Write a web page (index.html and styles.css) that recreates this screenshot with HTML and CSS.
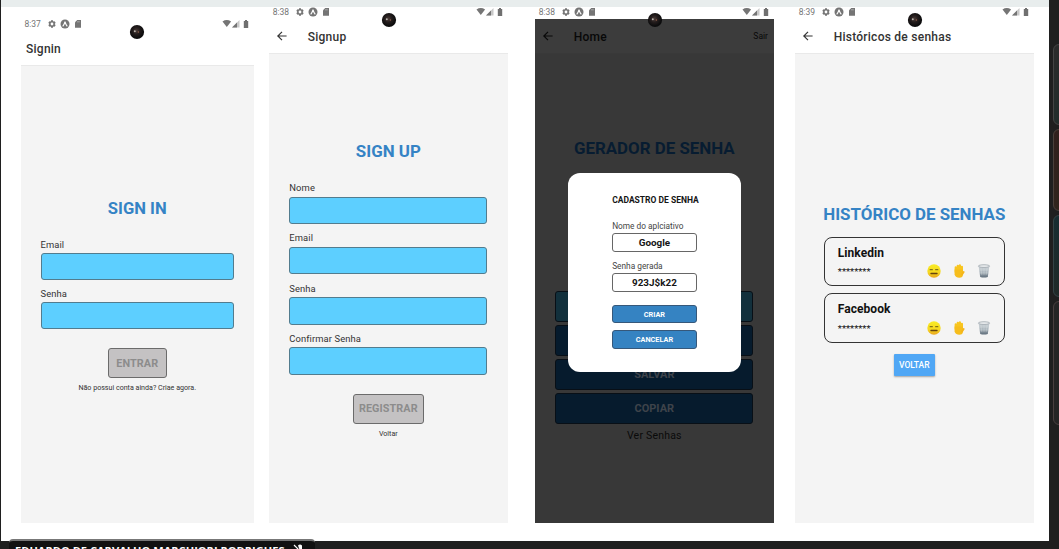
FILE: index.html
```
<!DOCTYPE html>
<html lang="pt-BR">
<head>
<meta charset="utf-8">
<title>Gerador de senha</title>
<link rel="stylesheet" href="styles.css">
</head>
<body>
<svg class="defs" width="0" height="0">
  <defs>
    <radialGradient id="lens" cx=".45" cy=".42" r=".5"><stop offset="0" stop-color="#4a3c38"/><stop offset=".5" stop-color="#231c1c"/><stop offset="1" stop-color="#0c0c0d"/></radialGradient>
    <linearGradient id="face" x1="0" y1="0" x2="0" y2="1"><stop offset="0" stop-color="#f8ec25"/><stop offset=".6" stop-color="#f6d820"/><stop offset="1" stop-color="#e9a51d"/></linearGradient>
    <linearGradient id="bin" x1="0" y1="0" x2="0" y2="1"><stop offset="0" stop-color="#d4dade"/><stop offset=".55" stop-color="#a9b3bb"/><stop offset="1" stop-color="#5c6b78"/></linearGradient>
  </defs>
  <symbol id="left-icons" viewBox="0 0 36 12">
    <path d="M6 2.300v7.400M2.800 4.150l6.400 3.700M2.800 7.850l6.400-3.700" stroke="#757575" stroke-width="2"/>
    <circle cx="6" cy="6" r="2.900" fill="#757575"/><circle cx="6" cy="6" r="1.400" fill="#fff"/>
    <circle cx="19" cy="6" r="4.500" fill="#757575"/>
    <path d="M16.700 8.300Q18.200 6.700 19 3.600Q19.800 6.700 21.300 8.300" fill="none" stroke="#fff" stroke-width="1.1"/>
    <path d="M31.200 2H35v7.800h-6V4.200z" fill="#757575"/><path d="M31 3.800h2.800" stroke="#ccc" stroke-width=".6"/>
  </symbol>
  <symbol id="right-icons" viewBox="0 0 28 12">
    <path d="M.5 3.500Q4.800 .700 9.100 3.500L4.800 9z" fill="#757575"/>
    <path d="M17.500 2v7.500H10z" fill="#c8c8c8"/><path d="M15 4.500v5h-5z" fill="#757575"/>
    <path d="M21.800 3h1.200V2h2v1h1.200v7h-4.400z" fill="#707070"/>
  </symbol>
  <symbol id="back" viewBox="0 0 12 12">
    <path d="M10.600 6H2M6 1.800L1.800 6L6 10.200" fill="none" stroke="currentColor" stroke-width="1.15"/>
  </symbol>
  <symbol id="camera" viewBox="0 0 16 16">
    <circle cx="8" cy="8" r="7.100" fill="url(#lens)"/><circle cx="5.800" cy="7.200" r="1" fill="#b8b3ad"/><circle cx="9.400" cy="8" r=".7" fill="#936049"/>
  </symbol>
  <symbol id="emoji-face" viewBox="0 0 14 14">
    <circle cx="7" cy="7" r="6.700" fill="url(#face)"/>
    <path d="M2.700 5.700h3.100M8.200 5.700h3.100" stroke="#594c14" stroke-width=".9"/><path d="M4 9.500h6" stroke="#66440d" stroke-width="1.4" stroke-linecap="round"/>
  </symbol>
  <symbol id="emoji-hand" viewBox="0 0 12 14">
    <path d="M2.700 8V3.400M4.800 7V1.800M6.900 7V1.400M8.900 7V2.800" stroke="#f8c51f" stroke-width="2.200" stroke-linecap="round"/>
    <path d="M1.600 5.500h8.400v4.700q0 3.500-3.800 3.500q-3.400 0-4.600-3z" fill="#f6bd1c"/><path d="M9 10.500l1.700-2.600" stroke="#f4b41a" stroke-width="1.800" stroke-linecap="round"/>
  </symbol>
  <symbol id="emoji-bin" viewBox="0 0 14 14">
    <path d="M1.600 2h10.800l-1.600 11q-3.800 1.200-7.600 0z" fill="url(#bin)"/>
    <path d="M4 4l.8 7M7 4v7M10 4l-.8 7M2.300 6h9.400M2.700 9h8.600" stroke="#e2e6e8" stroke-width=".3"/>
    <ellipse cx="7" cy="2.100" rx="5.700" ry="1.400" fill="#e5e8ea" stroke="#9ba4aa" stroke-width=".7"/>
  </symbol>
</svg>
<div class="call">
  <main class="stage">
    <section class="phone phone-signin">
      <svg class="camera"><use href="#camera"/></svg>
      <div class="status"><span>8:37</span><svg class="status-left"><use href="#left-icons"/></svg><svg class="status-right"><use href="#right-icons"/></svg></div>
      <header class="appbar"><h2>Signin</h2></header>
      <div class="screen">
        <h1 class="title t-signin">SIGN IN</h1>
        <form class="form">
          <label>Email</label><div class="field"></div>
          <label>Senha</label><div class="field"></div>
        </form>
        <div class="submit submit-signin">ENTRAR</div>
        <p class="link link-signin">Não possui conta ainda? Criae agora.</p>
      </div>
    </section>
    <section class="phone phone-signup">
      <svg class="camera"><use href="#camera"/></svg>
      <div class="status"><span>8:38</span><svg class="status-left"><use href="#left-icons"/></svg><svg class="status-right"><use href="#right-icons"/></svg></div>
      <header class="appbar"><svg class="back"><use href="#back"/></svg><h2>Signup</h2></header>
      <div class="screen">
        <h1 class="title">SIGN UP</h1>
        <form class="form">
          <label>Nome</label><div class="field"></div>
          <label>Email</label><div class="field"></div>
          <label>Senha</label><div class="field"></div>
          <label>Confirmar Senha</label><div class="field"></div>
        </form>
        <div class="submit submit-signup">REGISTRAR</div>
        <p class="link">Voltar</p>
      </div>
    </section>
    <section class="phone phone-home">
      <svg class="camera"><use href="#camera"/></svg>
      <div class="status"><span>8:38</span><svg class="status-left"><use href="#left-icons"/></svg><svg class="status-right"><use href="#right-icons"/></svg></div>
      <header class="appbar"><svg class="back"><use href="#back"/></svg><h2>Home</h2><span class="exit">Sair</span></header>
      <div class="screen">
        <h1 class="title t-home">GERADOR DE SENHA</h1>
        <div class="actions">
          <div class="action output"></div>
          <div class="action"></div>
          <div class="action">SALVAR</div>
          <div class="action">COPIAR</div>
        </div>
        <p class="see">Ver Senhas</p>
      </div>
      <div class="modal">
        <h3>CADASTRO DE SENHA</h3>
        <label>Nome do aplciativo</label><div class="input">Google</div>
        <label>Senha gerada</label><div class="input">923J$k22</div>
        <div class="modal-btn">CRIAR</div>
        <div class="modal-btn">CANCELAR</div>
      </div>
    </section>
    <section class="phone phone-history">
      <svg class="camera"><use href="#camera"/></svg>
      <div class="status"><span>8:39</span><svg class="status-left"><use href="#left-icons"/></svg><svg class="status-right"><use href="#right-icons"/></svg></div>
      <header class="appbar"><svg class="back"><use href="#back"/></svg><h2>Históricos de senhas</h2></header>
      <div class="screen">
        <h1 class="title t-history">HISTÓRICO DE SENHAS</h1>
        <div class="cards">
          <article class="card"><h4>Linkedin</h4><div class="row"><span>********</span><svg class="e-face"><use href="#emoji-face"/></svg><svg class="e-hand"><use href="#emoji-hand"/></svg><svg class="e-bin"><use href="#emoji-bin"/></svg></div></article>
          <article class="card"><h4>Facebook</h4><div class="row"><span>********</span><svg class="e-face"><use href="#emoji-face"/></svg><svg class="e-hand"><use href="#emoji-hand"/></svg><svg class="e-bin"><use href="#emoji-bin"/></svg></div></article>
        </div>
        <div class="return">VOLTAR</div>
      </div>
    </section>
  </main>
  <aside class="tiles">
    <div class="tile t1"></div><div class="tile t2"></div><div class="tile t3"></div><div class="tile t4"></div>
  </aside>
  <div class="nametag"><span>EDUARDO DE CARVALHO MARCHIORI RODRIGUES</span>
    <svg class="mic" viewBox="0 0 12 12"><path d="M5 1.500q2-2 4 0v4q-1.500 1-2.500 0z" fill="#fff"/><path d="M1 1l9 9" stroke="#fff" stroke-width="1.2"/></svg>
  </div>
</div>
</body>
</html>
```
FILE: styles.css
```
* { box-sizing: border-box; }
body { margin: 0; background: #1f1f1f; font-family: Roboto, "Liberation Sans", sans-serif; overflow: hidden; }
h1, h2, h3, h4, p { margin: 0; }
svg { display: block; flex: none; }
.defs { position: absolute; }
.call { position: relative; display: flex; width: 1059px; height: 549px; overflow: hidden; padding-left: 1px; }
.stage { width: 1048px; height: 541px; flex: none; display: flex; align-items: flex-start; background: #fff; border-top: 7px solid #e8eded; padding-left: 19.500px; }

.phone { position: relative; width: 239.300px; flex: none; height: 516px; display: flex; flex-direction: column; color: #333; }
.phone-signin { width: 233.500px; margin-top: 12px; height: 504px; }
.phone-signup { margin-left: 14.700px; }
.phone-home { margin-left: 26.700px; }
.phone-history { margin-left: 20.700px; }
.camera { position: absolute; width: 16px; height: 16px; left: 112.300px; top: 4.500px; z-index: 2; }
.phone-signin .camera { left: 108.700px; top: 4.500px; }
.status { height: 11.500px; flex: none; display: flex; align-items: center; padding: 0 4px; font-size: 8.500px; line-height: 11px; color: #757575; }
.status span { width: 17px; white-space: nowrap; }
.status-left { width: 36px; height: 12px; margin: -1px 0 0 4px; }
.status-right { width: 28px; height: 12px; margin: -1px 0 0 auto; }
.appbar { height: 34.500px; flex: none; display: flex; align-items: center; padding: 1px 6px 0 7px; }
.appbar h2 { font-size: 12px; font-weight: 500; line-height: 14px; letter-spacing: .25px; padding-top: 1px; white-space: nowrap; }
.back { width: 12px; height: 12px; margin-right: 20px; }
.phone-signin .appbar { padding-left: 5.500px; }
.screen { flex: 1; background: #f4f4f4; border-top: 1px solid #e9e9e9; display: flex; flex-direction: column; align-items: center; }

.title { margin-top: 86.500px; height: 20px; line-height: 20px; font-size: 16.900px; font-weight: 700; color: #3583c5; white-space: nowrap; }
.t-signin { margin-top: 132.500px; font-size: 16.600px; }
.form { width: 198px; margin-top: 20.500px; display: flex; flex-direction: column; }
.form label { height: 15.500px; line-height: 14px; font-size: 9.400px; letter-spacing: .1px; }
.field { height: 27.500px; margin-bottom: 7.300px; background: #5dcfff; border: 1px solid #527c8e; border-radius: 3px; }
.phone-signin .form { width: 193.500px; margin-top: 19px; }
.phone-signin .field { height: 27px; margin-bottom: 6.500px; }
.submit { display: flex; align-items: center; justify-content: center; height: 30px; border: 1px solid #6b6b6b; border-radius: 3px; background: #c4c2c3; color: #8c8c8c; font-size: 10.800px; font-weight: 700; letter-spacing: .1px; }
.submit-signin { width: 59px; margin-top: 12.500px; }
.submit-signup { width: 70.500px; margin-top: 11.800px; }
.link { margin-top: 4.500px; font-size: 7.100px; line-height: 11px; white-space: nowrap; }
.link-signin { margin-top: 3.500px; }

.phone-home .appbar { background: #3c3c3c; color: #080808; }
.phone-home .screen { background: #383838; border-color: #393939; }
.exit { margin-left: auto; font-size: 8.500px; }
.t-home { margin-top: 83.500px; color: #071c31; }
.actions { width: 198px; margin-top: 133.500px; display: flex; flex-direction: column; gap: 3.500px; }
.action { height: 30.500px; display: flex; align-items: center; justify-content: center; background: #061b2d; border: 1px solid #080f16; border-radius: 3px; color: #3e434a; font-size: 11px; font-weight: 700; }
.output { background: #12303c; }
.see { margin-top: 5.500px; font-size: 10.500px; line-height: 14px; color: #0a0a0a; letter-spacing: .2px; }
.modal { position: absolute; left: 33px; top: 166.300px; width: 173.500px; height: 199px; background: #fff; border-radius: 12px; display: flex; flex-direction: column; padding: 21px 44.500px 0 44.500px; color: #151515; }
.modal h3 { text-align: center; font-size: 8.500px; line-height: 12px; font-weight: 700; white-space: nowrap; margin-bottom: 14.500px; }
.modal label { font-size: 8.300px; line-height: 11px; height: 12.500px; color: #444; white-space: nowrap; }
.input { height: 18.500px; display: flex; align-items: center; justify-content: center; border: 1px solid #666; border-radius: 3px; font-size: 9.900px; font-weight: 700; margin-bottom: 9px; }
.modal-btn { height: 18.500px; display: flex; align-items: center; justify-content: center; background: #3583c2; border: 1px solid #36587a; border-radius: 3px; color: #fff; font-size: 7.300px; font-weight: 700; margin: 4px 0 3px; }

.t-history { margin-top: 149.500px; }
.cards { width: 181px; margin-top: 13.300px; display: flex; flex-direction: column; gap: 7px; }
.card { height: 49.500px; border: 1.500px solid #333; border-radius: 8px; padding: 8px 12px 0 13px; color: #111; }
.card h4 { font-size: 12px; line-height: 14px; font-weight: 700; letter-spacing: .05px; }
.row { display: flex; align-items: center; margin-top: 4.500px; }
.row span { width: 89.500px; font-size: 9.500px; line-height: 10px; padding-top: 2px; }
.e-face { width: 14px; height: 14px; }
.e-hand { width: 12px; height: 14px; margin-left: 12px; }
.e-bin { width: 14px; height: 14px; margin-left: 12px; }
.return { width: 40.500px; height: 21.500px; margin-top: 11.500px; border-radius: 1px; background: #50a7f5; color: #fff; box-shadow: 0 1px 2px #0005; display: flex; align-items: center; justify-content: center; font-size: 8.500px; font-weight: 500; }

.tiles { width: 10px; padding: 43.500px 0 0 4px; display: flex; flex-direction: column; gap: 4px; overflow: hidden; }
.tile { width: 60px; height: 81.700px; flex: none; border: 1px solid #444; border-radius: 6px; background: linear-gradient(#2b2b2b, #222d2b); }
.t2 { background: linear-gradient(#30201d, #30251d); border-color: #4a403b; }
.t3 { background: linear-gradient(#172d31, #202a28); border-color: #344346; }
.t4 { height: 124px; background: #252525; border-color: #493f3f; }
.nametag { position: absolute; left: 9px; top: 539px; width: 306px; height: 24px; background: #111; border-top: 2px solid #777; border-radius: 4px 4px 0 0; display: flex; padding: 2px 6px; color: #fff; font: 700 11.080px/16px "Open Sans", sans-serif; white-space: nowrap; }
.mic { width: 12px; height: 12px; margin: 1px 0 0 8px; }
```
